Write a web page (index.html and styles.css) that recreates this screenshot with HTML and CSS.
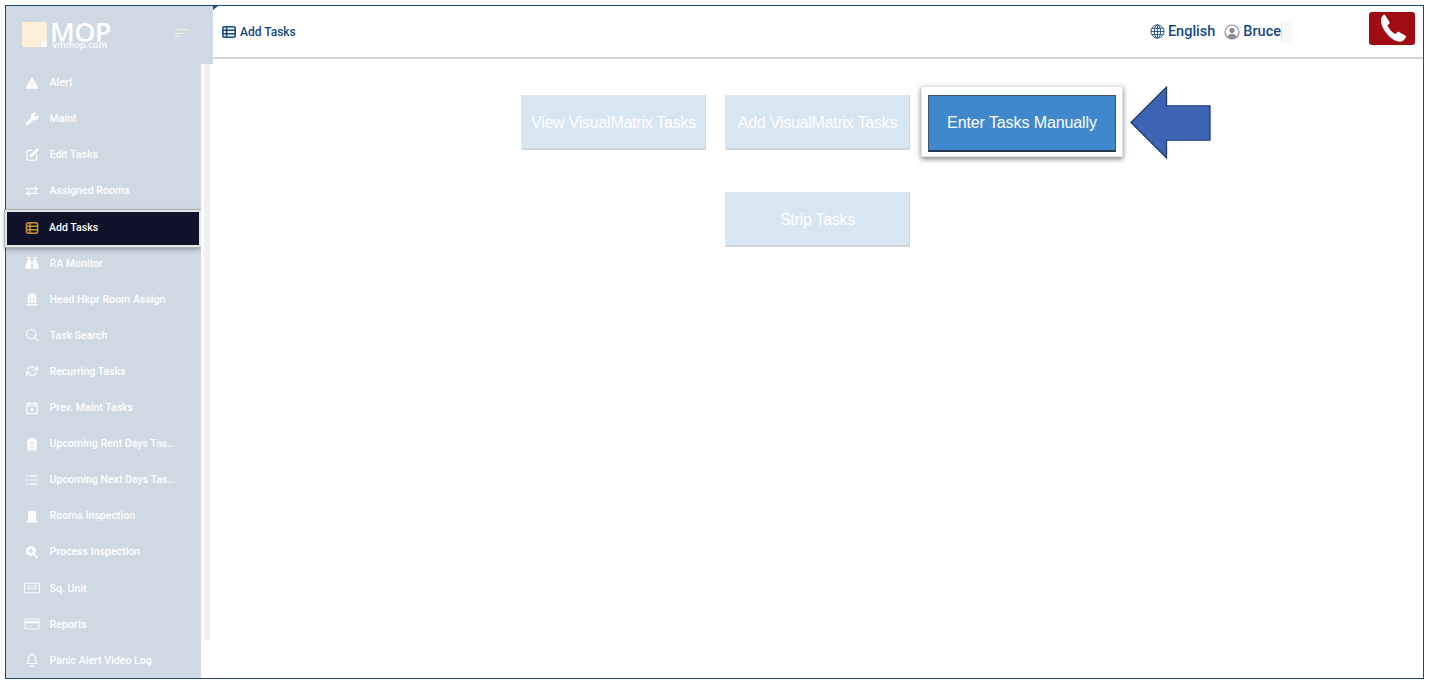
FILE: index.html
```html
<!DOCTYPE html>
<html lang="en">
<head>
<meta charset="utf-8">
<title>Add Tasks</title>
<link rel="stylesheet" href="styles.css">
</head>
<body>
<div class="frame">
  <aside class="sidebar">
    <div class="brand">
      <div class="logo-mark"><span class="logo-notch"></span></div>
      <div class="logo-text"><span class="logo-name">MOP</span><span class="logo-url">vmmop.com</span></div>
      <div class="burger"><span class="b1"></span><span class="b2"></span><span class="b3"></span></div>
    </div>
    <div class="side-body">
      <nav class="nav">
        <a class="item"><svg class="ico" viewBox="0 0 24 24"><path class="f" fill-rule="evenodd" d="M1 22h22L12 2 1 22zm12-3h-2v-2.500h2V19zm0-4.500h-2V9.500h2v5z"/></svg><span class="lbl">Alert</span></a>
        <a class="item"><svg class="ico" viewBox="0 0 24 24"><g transform="translate(24 0) scale(-1 1)"><path class="f" d="M22.700 19l-9.100-9.100c.9-2.300.4-5-1.500-6.900-2-2-5-2.400-7.400-1.300L9 6 6 9 1.600 4.700C.4 7.100.9 10.100 2.900 12.100c1.900 1.900 4.600 2.400 6.900 1.500l9.100 9.100c.4.4 1 .4 1.400 0l2.300-2.300c.5-.4.5-1.100.1-1.400z"/></g></svg><span class="lbl">Maint</span></a>
        <a class="item"><svg class="ico" viewBox="0 0 24 24"><path class="s" d="M12 4H5a2 2 0 0 0-2 2v13a2 2 0 0 0 2 2h13a2 2 0 0 0 2-2v-7"/><path class="f" d="M19 1.500a2.200 2.200 0 0 1 3.500 3.500L13 14.500l-4.500 1 1-4.500z"/></svg><span class="lbl">Edit Tasks</span></a>
        <a class="item"><svg class="ico" viewBox="0 0 24 24"><path class="s" d="M2 8h19M17 4l4.500 4-4.500 4M22 16H3M7 12l-4.500 4L7 20"/></svg><span class="lbl">Assigned Rooms</span></a>
        <a class="item active"><svg class="ico" viewBox="0 0 24 24"><rect class="s" x="2.500" y="3" width="19" height="18" rx="2.500"/><path class="s" d="M2.500 9h19M2.500 15h19M8.500 3v18"/></svg><span class="lbl">Add Tasks</span></a>
        <a class="item"><svg class="ico" viewBox="0 0 24 24"><path class="f" d="M4.500 2h5v4h-5zM14.500 2h5v4h-5zM4 7H10.500v15H1v-5zM13.500 7H20L23 17v5h-9.500zM11.500 10h1v5h-1z"/></svg><span class="lbl">RA Monitor</span></a>
        <a class="item"><svg class="ico" viewBox="0 0 24 24"><path class="f" d="M12 .5l2.500 2.500 3.500 1v4H6V4l3.500-1zM3.500 9h17v2h-17zM5 12h3.500v7H5zM10.250 12h3.500v7h-3.500zM15.500 12H19v7h-3.500zM2.500 20h19v3h-19z"/></svg><span class="lbl">Head Hkpr Room Assign</span></a>
        <a class="item"><svg class="ico" viewBox="0 0 24 24"><circle class="s" cx="10.500" cy="10.500" r="8"/><path class="s" d="M16.500 16.500l6 6"/></svg><span class="lbl">Task Search</span></a>
        <a class="item"><svg class="ico" viewBox="0 0 24 24"><path class="s" d="M21 4v6h-6M3 20v-6h6M4 10a8.500 8.500 0 0 1 14-3l3 3M20 14a8.500 8.500 0 0 1-14 3l-3-3"/></svg><span class="lbl">Recurring Tasks</span></a>
        <a class="item"><svg class="ico" viewBox="0 0 24 24"><rect class="s" x="3" y="4.500" width="18" height="17" rx="2"/><path class="s" d="M3 8.500h18M7.500 1.500v4M16.500 1.500v4M12 12v6M9 15h6"/></svg><span class="lbl">Prev. Maint Tasks</span></a>
        <a class="item"><svg class="ico" viewBox="0 0 24 24"><path class="f" fill-rule="evenodd" d="M6 3.500h3a3 3 0 0 1 6 0h3a2 2 0 0 1 2 2V21a2 2 0 0 1-2 2H6a2 2 0 0 1-2-2V5.500a2 2 0 0 1 2-2zM8 9v1.500h8V9zm0 4v1.500h8V13zm0 4v1.500h8V17z"/></svg><span class="lbl">Upcoming Rent Days Tasks</span></a>
        <a class="item"><svg class="ico" viewBox="0 0 24 24"><path class="s" d="M8 5h14M8 12h14M8 19h14M2.500 5h1.500M2.500 12h1.500M2.500 19h1.500"/></svg><span class="lbl">Upcoming Next Days Tasks</span></a>
        <a class="item"><svg class="ico" viewBox="0 0 24 24"><path class="f" fill-rule="evenodd" d="M5 3h14v17.500H5zM15 11v2h2v-2zM1.500 20.500h21V23h-21z"/></svg><span class="lbl">Rooms Inspection</span></a>
        <a class="item"><svg class="ico" viewBox="0 0 24 24"><path class="f" fill-rule="evenodd" d="M10 1.500a8.500 8.500 0 0 1 6.800 13.600l5.700 5.700-2.200 2.200-5.700-5.700A8.500 8.500 0 1 1 10 1.500zM8.700 5.500v3.200H5.500v2.600h3.200v3.200h2.600v-3.200h3.200V8.700h-3.200V5.500z"/></svg><span class="lbl">Process Inspection</span></a>
        <a class="item"><svg class="ico" viewBox="0 0 30 24"><rect class="s" x="1" y="3" width="28" height="18" rx="2.500"/><path class="s" d="M7 9h3M7 13h3M14 9h1.500M20 9h3M20 13h3M13 14h4"/></svg><span class="lbl">Sq. Unit</span></a>
        <a class="item"><svg class="ico" viewBox="0 0 30 24"><rect class="s" x="2" y="2.500" width="26" height="19" rx="2.500"/><path class="f" d="M2 7h26v4H2zM7 16h3v1.500H7zM12 16h3v1.500h-3z"/></svg><span class="lbl">Reports</span></a>
        <a class="item"><svg class="ico" viewBox="0 0 24 24"><path class="s" d="M12 3a6 6 0 0 1 6 6c0 6 2.500 8 2.500 9h-17c0-1 2.500-3 2.500-9a6 6 0 0 1 6-6zM12 1v2M10 21a2 2 0 0 0 4 0"/></svg><span class="lbl">Panic Alert Video Log</span></a>
      </nav>
      <div class="scroll"><div class="thumb"></div></div>
    </div>
  </aside>
  <div class="content">
    <header class="topbar">
      <div class="title">
        <svg class="title-ico" viewBox="0 0 24 24"><rect x="1.500" y="3" width="21" height="18" rx="2.500"/><path d="M1.500 9h21M1.500 15h21M8 3v18"/></svg>
        <span>Add Tasks</span>
      </div>
      <div class="tools">
        <svg class="globe" viewBox="0 0 24 24"><circle cx="12" cy="12" r="10.500"/><ellipse cx="12" cy="12" rx="5" ry="10.500"/><path d="M12 1.500v21M1.500 12h21M3 7h18M3 17h18"/></svg>
        <span class="tool-text">English</span>
        <svg class="user" viewBox="0 0 24 24"><circle class="u-ring" cx="12" cy="12" r="10.500"/><circle class="u-fill" cx="12" cy="9.500" r="4"/><path class="u-fill" d="M5 19.500c1-3.500 4-5 7-5s6 1.500 7 5a10 10 0 0 1-14 0z"/></svg>
        <span class="tool-text">Bruce</span>
        <span class="divider"></span>
        <button class="call"><svg viewBox="0 0 24 24"><path d="M5.800.8 9.500 6.600c.3.500.2 1.100-.2 1.500L7.800 9.500c1.300 3 3.600 5.600 6.700 7.100l1.400-1.500c.4-.4 1-.5 1.500-.2l5.400 3.200c.5.300.6.900.3 1.400-1.200 1.900-2.800 3.400-4.500 3.400C11 23 1.800 11.500 2.500 4.500c.1-1.300 1-2.700 2-3.600.4-.4 1-.4 1.300-.1z"/></svg></button>
      </div>
    </header>
    <main class="main">
      <div class="row">
        <button class="task">View VisualMatrix Tasks</button>
        <button class="task">Add VisualMatrix Tasks</button>
        <div class="focus"><button class="task-on">Enter Tasks Manually</button></div>
        <svg class="arrow" viewBox="0 0 82 74" preserveAspectRatio="none"><path d="M1 37 37 1V20H81V55H37V73z"/></svg>
      </div>
      <div class="row-two">
        <button class="task">Strip Tasks</button>
      </div>
    </main>
  </div>
</div>
</body>
</html>
```
FILE: styles.css
```css
* { box-sizing: border-box; }
html, body { margin: 0; padding: 0; background: #fff; overflow: hidden; }
body { font-family: Roboto, "Liberation Sans", sans-serif; }

.frame {
  margin: 5px 0 5px 5px;
  width: 1419px;
  height: 674px;
  border: 1px solid #1b4a7e;
  display: flex;
  background: #fff;
}

.sidebar { width: 207px; flex: none; display: flex; flex-direction: column; background: #fff; }

.brand {
  height: 58px;
  flex: none;
  background: #cfd9e4;
  display: flex;
  align-items: flex-start;
  padding: 16px 0 0 16px;
}
.logo-mark { width: 25px; height: 25px; background: #fdf0d9; display: flex; justify-content: flex-end; align-items: flex-end; flex: none; }
.logo-notch { width: 6px; height: 6px; background: #fff; }
.logo-text { display: flex; flex-direction: column; margin-left: 3px; width: 62px; flex: none; }
.logo-name { font-family: "Open Sans", sans-serif; font-weight: 600; font-size: 27px; line-height: 20px; color: #fff; letter-spacing: -.7px; }
.logo-url { font-family: "Open Sans", sans-serif; font-size: 9.200px; line-height: 6px; color: #fff; margin-left: 2px; font-weight: 600; }
.burger { display: flex; flex-direction: column; gap: 2.500px; margin: 7px 0 0 63px; }
.burger span { display: block; height: 1px; background: #f5ecd8; }
.b1 { width: 14px; }
.b2 { width: 10px; }
.b3 { width: 6px; }

.side-body { flex: 1; display: flex; min-height: 0; }
.nav { width: 195px; flex: none; background: #cfd9e4; display: grid; grid-auto-rows: 36.120px; padding-top: .5px; }
.item {
  display: flex;
  align-items: center;
  gap: 9.500px;
  padding-left: 18px;
  color: #fff;
  font-size: 10.600px;
  font-weight: 500;
  min-width: 0;
}
.ico { width: 16px; height: 14px; flex: none; }
.ico .f { fill: #fff; }
.ico .s { fill: none; stroke: #fff; stroke-width: 2; stroke-linecap: round; stroke-linejoin: round; }
.lbl { white-space: nowrap; overflow: hidden; text-overflow: ellipsis; max-width: 126px; }

.item.active {
  height: 33px;
  margin: 3.100px 2px 0 1px;
  padding: 0 0 2px 17px;
  gap: 9px;
  background: #0f1228;
  box-shadow: 0 0 0 2px #e4e6e8, 0 0 0 3px #a9adb2, 0 2px 5px 2px rgba(0, 0, 0, .35);
}
.item.active .s { stroke: #c4952f; stroke-width: 2.600; stroke-linecap: butt; }

.scroll { width: 12px; flex: none; padding-left: 3px; background: #fff; }
.thumb { width: 6px; height: 576px; background: #f0f0f0; border-radius: 0 0 4px 4px; }

.content { flex: 1; display: flex; flex-direction: column; min-width: 0; position: relative; }
.content::before {
  content: "";
  position: absolute;
  left: 0;
  top: 0;
  border-top: 4px solid #1b4a7e;
  border-right: 5px solid transparent;
}

.topbar {
  height: 53px;
  flex: none;
  border-bottom: 2px solid #d6d6d6;
  display: flex;
  align-items: center;
  padding: 0 8px 0 9px;
}
.title { display: flex; align-items: center; gap: 4px; color: #174a84; font-size: 12px; font-weight: 500; }
.title-ico { width: 14px; height: 14px; fill: none; stroke: #174a84; stroke-width: 2.800; }

.tools { margin-left: auto; display: flex; align-items: center; color: #174a84; }
.globe { width: 15px; height: 15px; fill: none; stroke: #174a84; stroke-width: 1.400; margin-right: 3px; }
.tool-text { font-size: 14.500px; font-weight: 500; }
.user { width: 16px; height: 16px; margin: 0 3px 0 9px; }
.u-ring { fill: #fff; stroke: #8b8e96; stroke-width: 1.800; }
.u-fill { fill: #8b8e96; }
.divider { width: 11px; height: 20px; background: #f8f8f8; border-left: 1px solid #e2e2e2; }
.call {
  width: 46px;
  height: 33px;
  margin: 0 0 6px 77px;
  border: 0;
  padding: 0;
  border-radius: 3px;
  background: #a00c12;
  display: flex;
  align-items: center;
  justify-content: center;
}
.call svg { width: 29px; height: 29px; fill: #fff; }

.main { flex: 1; padding: 27px 0 0 308px; }
.row { display: flex; align-items: flex-start; }
.task {
  width: 185px;
  height: 55px;
  margin: 9px 19px 0 0;
  padding: 1px 0 0;
  flex: none;
  background: #d7e6f3;
  border: 1px solid #e2e6ea;
  border-right-color: #cfd4da;
  border-bottom: 2px solid #cfd4da;
  color: #fff;
  font: 16px "Liberation Sans", Arial, sans-serif;
  letter-spacing: -.25px;
}
.focus {
  width: 202px;
  height: 71px;
  margin-left: -8px;
  padding: 8px 6px 5px;
  flex: none;
  background: #fff;
  border: 1px solid #e4e4e4;
  box-shadow: 0 2px 5px rgba(0, 0, 0, .5);
}
.task-on {
  display: block;
  width: 188px;
  height: 57px;
  padding: 0;
  background: #3f88ce;
  border: 1px solid #44566b;
  border-bottom: 2px solid #27394f;
  color: #fff;
  font: 16px "Liberation Sans", Arial, sans-serif;
  letter-spacing: -.1px;
}
.arrow { width: 81px; height: 73px; margin-left: 7px; flex: none; }
.arrow path { fill: #3d64b4; stroke: #1c386a; stroke-width: 1.200; }
.row-two { display: flex; margin: 33px 0 0 204px; }
.row-two .task { margin: 0; }
```
